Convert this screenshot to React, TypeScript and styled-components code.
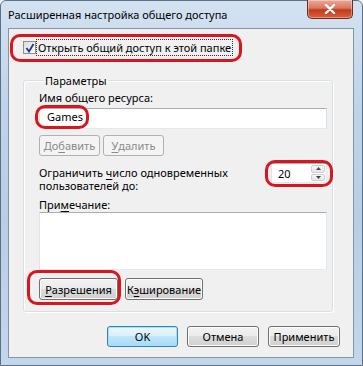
import React from "react";
import styled, { createGlobalStyle, css } from "styled-components";

const Global = createGlobalStyle`
  html, body { margin: 0; padding: 0; background: #ffffff; }
  body { font-family: "Noto Sans", "Segoe UI", sans-serif; font-size: 11px; color: #000; }
  * { box-sizing: border-box; }
`;

const Window = styled.div`
  width: 363px;
  height: 366px;
  display: flex;
  flex-direction: column;
  padding: 0 8px 7px 7px;
  border: 1px solid #5b6f86;
  border-radius: 6px 6px 0 0;
  background: linear-gradient(180deg, #d3e2f1 0%, #bfd3e8 30%, #b9cee5 60%, #c3d6ea 100%);
`;

const TitleBar = styled.div`
  height: 27px;
  display: flex;
  align-items: flex-start;
  justify-content: space-between;
`;

const Title = styled.div`
  padding-top: 6px;
  font-size: 11px;
  color: #000;
`;

const CloseBtn = styled.div`
  width: 46px;
  height: 19px;
  margin-right: 1px;
  margin-top: -1px;
  border: 1px solid #6d2a22;
  border-top: none;
  border-radius: 0 0 5px 5px;
  background: linear-gradient(180deg, #eaa998 0%, #d8775c 45%, #c23a1f 55%, #d9603a 100%);
  display: flex;
  align-items: center;
  justify-content: center;
  box-shadow: inset 0 0 0 1px rgba(255, 255, 255, 0.35);
`;

const Client = styled.div`
  flex: 1;
  background: #f0f0f0;
  border: 1px solid #8595a8;
  display: flex;
  flex-direction: column;
  padding: 10px 13px 10px 14px;
`;

const Highlight = styled.span<{ $inset: string }>`
  position: relative;
  display: inline-flex;
  align-self: flex-start;
  &::after {
    content: "";
    position: absolute;
    inset: ${(p) => p.$inset};
    border: 3px solid #d7161e;
    border-radius: 10px;
    pointer-events: none;
  }
`;

const CheckRow = styled.label`
  display: flex;
  align-items: center;
  gap: 1px;
  height: 17px;
`;

const CheckBox = styled.span`
  width: 13px;
  height: 13px;
  border: 1px solid #8e8f8f;
  background: linear-gradient(135deg, #dcdcdc, #fbfbfb);
  display: flex;
  align-items: center;
  justify-content: center;
`;

const FocusText = styled.span`
  padding: 0 1px 0 1px;
  line-height: 15px;
  outline: 1px dotted #333;
`;

const Group = styled.fieldset`
  margin: 17px 7px 0 0;
  padding: 2px 5px 11px 15px;
  border: 1px solid #d5dfe5;
  border-radius: 3px;
  box-shadow: inset 1px 1px 0 #ffffff, 1px 1px 0 #ffffff;
  display: flex;
  flex-direction: column;
  min-width: 0;
`;

const Legend = styled.legend`
  padding: 0 1px;
  margin-left: 5px;
  line-height: 15px;
  color: #000;
`;

const Label = styled.div<{ $lh?: number; $mt?: number }>`
  line-height: ${(p) => p.$lh ?? 15}px;
  margin-top: ${(p) => p.$mt ?? 0}px;
`;

const TextInput = styled.div`
  height: 21px;
  margin-top: 3px;
  background: #fff;
  border: 1px solid #e3e9ef;
  border-top-color: #abadb3;
  border-left-color: #e2e3ea;
  border-right-color: #dbdfe6;
  display: flex;
  align-items: center;
  padding-left: 7px;
`;

const Row = styled.div<{ $gap?: number; $mt?: number }>`
  display: flex;
  gap: ${(p) => p.$gap ?? 6}px;
  margin-top: ${(p) => p.$mt ?? 0}px;
  align-items: center;
`;

const Button = styled.div<{ $w: number; $h?: number; $disabled?: boolean; $default?: boolean }>`
  width: ${(p) => p.$w}px;
  height: ${(p) => p.$h ?? 22}px;
  border: 1px solid #707070;
  border-radius: 3px;
  background: linear-gradient(180deg, #f2f2f2 0%, #ebebeb 49%, #dddddd 50%, #cfcfcf 100%);
  box-shadow: inset 0 0 0 1px #fcfcfc;
  display: flex;
  align-items: center;
  justify-content: center;
  color: #000;
  ${(p) =>
    p.$disabled &&
    css`
      border-color: #adb2b5;
      background: #f4f4f4;
      box-shadow: none;
      color: #8a8a8a;
    `}
  ${(p) =>
    p.$default &&
    css`
      border-color: #3c7fb1;
      background: linear-gradient(180deg, #eaf6fd 0%, #d9f0fc 49%, #bee6fd 50%, #a7d9f5 100%);
      box-shadow: inset 0 0 0 1px #9ee4f7;
    `}
`;

const U = styled.span`
  text-decoration: underline;
  text-underline-offset: 2px;
`;

const LimitRow = styled.div`
  display: flex;
  justify-content: space-between;
  align-items: flex-start;
  margin-top: 7px;
`;

const Spinner = styled.div`
  width: 56px;
  height: 20px;
  display: flex;
  background: #fff;
  border: 1px solid #e3e9ef;
  border-top-color: #abadb3;
  border-left-color: #e2e3ea;
  padding: 1px;
`;

const SpinValue = styled.div`
  flex: 1;
  padding-left: 5px;
  display: flex;
  align-items: center;
`;

const SpinArrows = styled.div`
  width: 14px;
  display: flex;
  flex-direction: column;
  gap: 1px;
`;

const SpinBtn = styled.div`
  flex: 1;
  border: 1px solid #d0d0d0;
  border-radius: 2px;
  background: linear-gradient(180deg, #f7f7f7, #e6e6e6);
  display: flex;
  align-items: center;
  justify-content: center;
`;

const TextArea = styled.div`
  height: 58px;
  background: #fff;
  border: 1px solid #e3e9ef;
  border-top-color: #abadb3;
  border-left-color: #e2e3ea;
`;

const Footer = styled.div`
  display: flex;
  justify-content: flex-end;
  gap: 9px;
  margin-top: auto;
`;

export default function App() {
  return (
    <>
      <Global />
      <Window>
        <TitleBar>
          <Title>Расширенная настройка общего доступа</Title>
          <CloseBtn>
            <svg width="12" height="10" viewBox="0 0 12 10">
              <path d="M2 1 L10 9 M10 1 L2 9" stroke="#fff" strokeWidth="2.4" strokeLinecap="round" />
            </svg>
          </CloseBtn>
        </TitleBar>
        <Client>
          <Highlight $inset="-5px -10px -6px -13px">
            <CheckRow>
              <CheckBox>
                <svg width="10" height="10" viewBox="0 0 10 10">
                  <path d="M1.5 5 L4 8.5 L8.5 1" stroke="#1c3a8e" strokeWidth="1.8" fill="none" />
                </svg>
              </CheckBox>
              <FocusText>Открыть общий доступ к этой папке</FocusText>
            </CheckRow>
          </Highlight>
          <Group>
            <Legend>Параметры</Legend>
            <Label>Имя общего ресурса:</Label>
            <TextInput>
              <Highlight $inset="-4px -6px -5px -12px">Games</Highlight>
            </TextInput>
            <Row $mt={6} $gap={3}>
              <Button $w={61} $h={21} $disabled>
                До<U>б</U>авить
              </Button>
              <Button $w={61} $h={21} $disabled>
                <U>У</U>далить
              </Button>
            </Row>
            <LimitRow>
              <Label $lh={13} $mt={3}>
                Ограничить <U>ч</U>исло одновременных
                <br />
                пользователей до:
              </Label>
              <Highlight $inset="-3px -6px -4px -6px">
                <Spinner>
                  <SpinValue>20</SpinValue>
                  <SpinArrows>
                    <SpinBtn>
                      <svg width="5" height="3" viewBox="0 0 5 3">
                        <path d="M0 3 L2.5 0 L5 3Z" fill="#444" />
                      </svg>
                    </SpinBtn>
                    <SpinBtn>
                      <svg width="5" height="3" viewBox="0 0 5 3">
                        <path d="M0 0 L2.5 3 L5 0Z" fill="#444" />
                      </svg>
                    </SpinBtn>
                  </SpinArrows>
                </Spinner>
              </Highlight>
            </LimitRow>
            <Label $lh={14} $mt={6}>
              При<U>м</U>ечание:
            </Label>
            <TextArea />
            <Row $mt={8} $gap={7}>
              <Highlight $inset="-8px -3px -5px -12px">
                <Button $w={79} $h={22}>
                  <U>Р</U>азрешения
                </Button>
              </Highlight>
              <Button $w={78} $h={22}>
                К<U>э</U>ширование
              </Button>
            </Row>
          </Group>
          <Footer>
            <Button $w={71} $h={21} $default>
              OK
            </Button>
            <Button $w={72} $h={21}>
              Отмена
            </Button>
            <Button $w={72} $h={21}>
              Применить
            </Button>
          </Footer>
        </Client>
      </Window>
    </>
  );
}
